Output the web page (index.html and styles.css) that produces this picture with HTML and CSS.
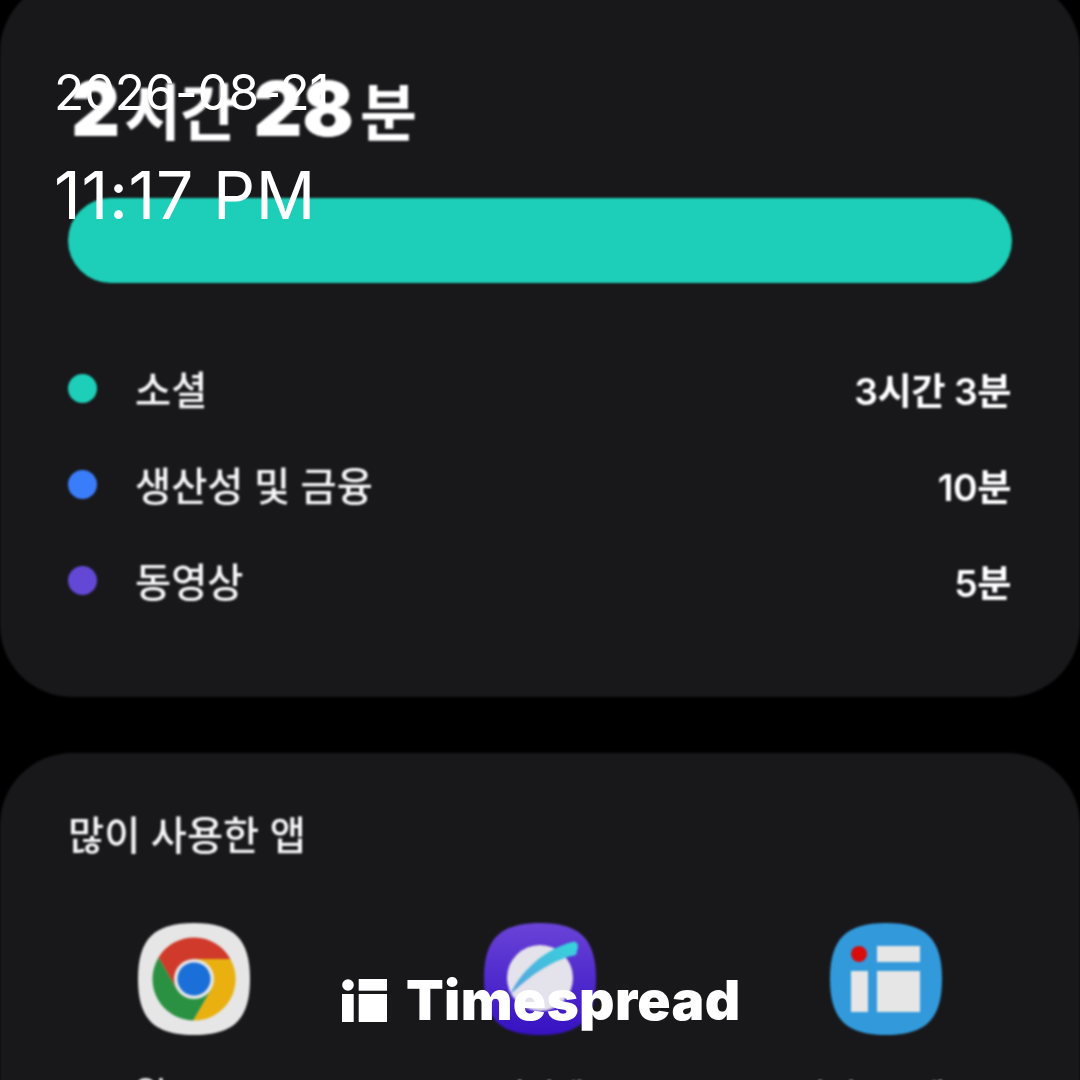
FILE: index.html
```html
<!DOCTYPE html>
<html lang="ko">
<head>
<meta charset="utf-8">
<title>Timespread</title>
<link rel="stylesheet" href="styles.css">
</head>
<body>
<div class="screen">
  <section class="card summary">
    <h1 class="total"><span class="num">2</span><span class="unit">시간</span><span class="num gap-left">28</span><span class="unit tail">분</span></h1>
    <div class="bar"></div>
    <ul class="legend">
      <li class="row"><span class="dot teal"></span><span class="name">소셜</span><span class="value">3시간 3분</span></li>
      <li class="row"><span class="dot blue"></span><span class="name">생산성 및 금융</span><span class="value">10분</span></li>
      <li class="row"><span class="dot violet"></span><span class="name">동영상</span><span class="value">5분</span></li>
    </ul>
  </section>
  <section class="card apps">
    <h2 class="apps-title">많이 사용한 앱</h2>
    <div class="app-grid">
      <div class="app">
        <svg class="app-icon" viewBox="0 0 112 112">
          <path fill="#e6e6e6" d="M56 0C96 0 112 16 112 56C112 96 96 112 56 112C16 112 0 96 0 56C0 16 16 0 56 0Z"/>
          <path fill="#d03a2a" d="M20.500 34.500A41.500 41.500 0 0 1 92.400 36L56 36L38.700 66Z"/>
          <path fill="#e9b00f" d="M92.400 36A41.500 41.500 0 0 1 55.100 97.500L73.300 66L56 36Z"/>
          <path fill="#2a9142" d="M55.100 97.500A41.500 41.500 0 0 1 20.500 34.500L38.700 66L73.300 66Z"/>
          <circle cx="56" cy="56" r="20" fill="#e6e6e6"/>
          <circle cx="56" cy="56" r="16.500" fill="#1a6fd8"/>
        </svg>
        <span class="app-label">Chrome</span>
      </div>
      <div class="app">
        <svg class="app-icon" viewBox="0 0 112 112">
          <defs>
            <linearGradient id="pl" x1="0" y1="0" x2="0" y2="1"><stop offset="0" stop-color="#6a43d8"/><stop offset="1" stop-color="#3612c2"/></linearGradient>
            <linearGradient id="ring" x1="0" y1="1" x2="1" y2="0"><stop offset="0" stop-color="#5b9fe0"/><stop offset="1" stop-color="#33d6dc"/></linearGradient>
          </defs>
          <path fill="url(#pl)" d="M56 0C96 0 112 16 112 56C112 96 96 112 56 112C16 112 0 96 0 56C0 16 16 0 56 0Z"/>
          <circle cx="56" cy="55" r="33" fill="#e4e2ea"/>
          <path fill="url(#ring)" d="M26 72C38 46 62 26 88 19Q94 18 94 24L92 32C70 36 46 52 26 72Z"/>
        </svg>
        <span class="app-label ko">인터넷</span>
      </div>
      <div class="app">
        <svg class="app-icon" viewBox="0 0 112 112">
          <path fill="#329adb" d="M56 0C96 0 112 16 112 56C112 96 96 112 56 112C16 112 0 96 0 56C0 16 16 0 56 0Z"/>
          <circle cx="29" cy="31" r="8" fill="#d90b0b"/>
          <rect x="47" y="23" width="43" height="16" fill="#e6e6e6"/>
          <rect x="21" y="48" width="17" height="41" fill="#e6e6e6"/>
          <rect x="47" y="48" width="43" height="41" fill="#e6e6e6"/>
        </svg>
        <span class="app-label ko">타임스프레드</span>
      </div>
    </div>
  </section>
</div>
<div class="stamp"><span class="stamp-date">2026-08-21</span><span class="stamp-time">11:17 PM</span></div>
<div class="brand">
  <svg class="brand-mark" viewBox="0 0 45 43">
    <circle cx="6" cy="6" r="5.800" fill="#fff"/>
    <rect x="16.700" y="0" width="28.300" height="11.700" fill="#fff"/>
    <rect x="0" y="15" width="11.700" height="28" fill="#fff"/>
    <rect x="16.700" y="15" width="28.300" height="28" fill="#fff"/>
  </svg>
  <span class="brand-name">Timespread</span>
</div>
</body>
</html>
```
FILE: styles.css
```css
* { box-sizing: border-box; }
html, body { margin: 0; padding: 0; }
body {
  width: 1080px;
  height: 1080px;
  overflow: hidden;
  background: #000;
  position: relative;
  font-family: "Inter", "Noto Sans CJK KR", sans-serif;
  color: #f2f2f4;
}
.screen {
  display: flex;
  flex-direction: column;
  gap: 56px;
  margin-top: -20px;
  filter: blur(.8px);
}
.card {
  background: #18181b;
  border-radius: 72px;
  padding: 0 68px;
}
.summary {
  height: 717px;
  padding-top: 94px;
}
.total {
  margin: 0 0 0 3px;
  height: 68px;
  line-height: 68px;
  white-space: nowrap;
  color: #fff;
  display: flex;
  align-items: baseline;
}
.total .num { font-size: 76px; font-weight: 900; letter-spacing: 0; }
.total .unit { font-size: 62px; font-weight: 700; letter-spacing: -1px; margin-left: 4px; }
.total .gap-left { margin-left: 17px; }
.total .tail { margin-left: 6px; }
.bar {
  height: 85px;
  margin-top: 56px;
  border-radius: 43px;
  background: #1dcfb8;
}
.legend {
  list-style: none;
  margin: 80px 0 0;
  padding: 0;
  display: flex;
  flex-direction: column;
  gap: 47px;
}
.row {
  display: flex;
  align-items: center;
  height: 49px;
  font-size: 39.300px;
}
.dot { width: 29px; height: 29px; border-radius: 50%; margin-right: 38px; flex: none; position: relative; top: 1px; }
.teal { background: #1dcfb8; }
.blue { background: #3a7dfb; }
.violet { background: #6348d6; }
.name { flex: 1; color: #f6f6f8; font-weight: 500; }
.value { font-size: 37.300px; font-weight: 600; color: #fff; letter-spacing: -.5px; margin-right: 1px; position: relative; top: 1px; }
.apps { height: 420px; padding-top: 58px; }
.apps-title { margin: 0; font-size: 39.300px; line-height: 50px; font-weight: 500; color: #f6f6f8; }
.app-grid {
  display: grid;
  grid-template-columns: repeat(3, 112px);
  justify-content: space-between;
  margin: 62px 70px 0;
}
.app { display: flex; flex-direction: column; align-items: center; gap: 36px; }
.app-icon { width: 112px; height: 112px; display: block; }
.app-label { font-size: 32px; line-height: 40px; white-space: nowrap; color: #e4e4e6; font-weight: 500; }
.app-label.ko { padding-top: 5px; }
.stamp {
  position: absolute;
  left: 54px;
  top: 62px;
  display: flex;
  flex-direction: column;
  font-family: "Inter", sans-serif;
  font-weight: 400;
  color: #fff;
  white-space: nowrap;
}
.stamp-date { font-size: 49.500px; line-height: 60px; letter-spacing: -.3px; }
.stamp-time { font-size: 66px; line-height: 80px; margin-top: 33px; letter-spacing: .6px; }
.brand {
  position: absolute;
  left: 342px;
  top: 979px;
  display: flex;
  align-items: flex-start;
  gap: 19px;
}
.brand-mark { width: 45px; height: 43px; display: block; }
.brand-name {
  font-family: "Inter", sans-serif;
  font-size: 55px;
  line-height: 43px;
  font-weight: 900;
  letter-spacing: .3px;
  color: #fff;
}
```
